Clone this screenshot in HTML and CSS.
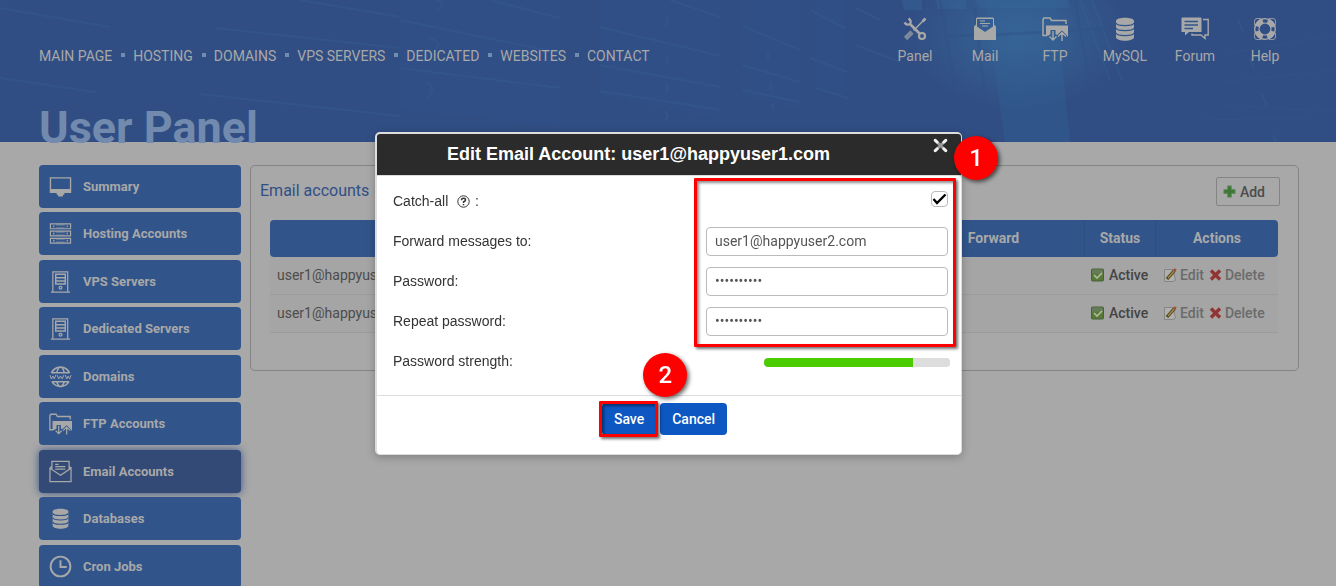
FILE: index.html
```html
<!DOCTYPE html>
<html lang="en">
<head>
<meta charset="utf-8">
<title>User Panel</title>
<link rel="stylesheet" href="styles.css">
</head>
<body>
<svg class="defs" aria-hidden="true">
  <symbol id="i-ftp" viewBox="0 0 26 24">
    <path d="M5 18.500H1V2.500L2 1H8L9.500 3.500H24V7" fill="none" stroke="currentColor" stroke-width="1.500"/>
    <path d="M4 8.500H26V20L24.500 18L20 13.500L15 18L13.500 17V13H8.500V17L6.500 18.500L4 19Z" fill="currentColor"/>
    <path d="M11 14V23M7.500 19.500L11 23L14.500 19.500M20 24V15M16 19.500L20 15.500L24 19.500" fill="none" stroke="currentColor" stroke-width="1.400"/>
  </symbol>
  <symbol id="i-db" viewBox="0 0 24 24">
    <path d="M3 4C3-.3 21-.3 21 4V20C21 25 3 25 3 20Z" fill="currentColor"/>
    <path class="cut" d="M3 6C4 9.500 20 9.500 21 6M3 11C4 14.500 20 14.500 21 11M3 16C4 19.500 20 19.500 21 16" fill="none" stroke-width="1.200"/>
  </symbol>
  <symbol id="i-tower" viewBox="0 0 24 24">
    <path d="M4 22.500V1.500H19.500V22.500M2 22.500H22" fill="none" stroke="currentColor" stroke-width="1.300"/>
    <path d="M7 4H17V14H7ZM7 7.500H17M7 11H17" fill="none" stroke="currentColor" stroke-width="1.500"/>
    <circle cx="12" cy="18" r="1.500" fill="none" stroke="currentColor" stroke-width="1.300"/>
  </symbol>
  <symbol id="i-active" viewBox="0 0 13 13">
    <rect x=".5" y=".5" width="12" height="12" rx="1" fill="#587a35" stroke="#46613b"/>
    <path d="M1 1H12V5H1Z" fill="#667c58"/>
    <path d="M3 6.500L6 9.500L11 4.500" fill="none" stroke="#adb8a2" stroke-width="1.700"/>
  </symbol>
  <symbol id="i-edit" viewBox="0 0 13 14">
    <path d="M.5 1.500H9L11.500 12L9 13.500H.5Z" fill="#b0b0ac" stroke="#858585"/>
    <path d="M3 11L10.500 2.500" stroke="#54451f" stroke-width="3.400"/>
    <path d="M4 10L10.500 2.500" stroke="#a08b4b" stroke-width="1.400"/>
    <path d="M10 3L11.800 1" stroke="#a24b3b" stroke-width="2.600"/>
  </symbol>
  <symbol id="i-delete" viewBox="0 0 13 13">
    <path d="M2 2L11 11M11 2L2 11" stroke="#913434" stroke-width="3.400"/>
  </symbol>
</svg>

<div class="page">
  <header class="header">
    <svg class="backdrop" viewBox="0 0 1336 142" preserveAspectRatio="none" aria-hidden="true">
      <defs>
        <radialGradient id="glow"><stop offset="0" stop-color="#366496"/><stop offset="1" stop-color="#366496" stop-opacity="0"/></radialGradient>
      </defs>
      <g fill="#31558b" opacity=".25">
        <path d="M400 0H560V125L400 110ZM600 0H720V120L600 95ZM742 0H800V110L742 95ZM815 0H845V100L815 85Z"/>
      </g>
      <path d="M985 0H1056L1070 142H1005Z" fill="#31588d" opacity=".8"/>
      <g fill="none" stroke="#345f92" stroke-width="2" opacity=".4">
        <path d="M0 8L110 27M0 78L95 92M215 28L400 48M200 94L400 116M300 0L400 17M400 20L560 53M490 0L560 18M400 68L560 88M600 27L720 56M600 65L720 87M600 91L720 110M670 0L720 17M742 26L800 50M742 65L800 82M742 90L800 102M810 10L845 28M810 58L847 72M815 88L848 98M856 8L880 20M856 45L900 62"/>
        <path d="M436 0Q447 2 438 10M429 38Q444 42 435 50M426 82Q438 88 427 99M665 15Q670 20 665 26M665 55Q670 60 665 65M665 83Q670 88 665 93M665 111Q670 116 665 121M768 52V60M771 82V90M773 103V110M1238 20L1243 31M1250 58L1254 69M1262 94L1267 106M1273 135L1276 142"/>
        <path d="M1080 0L1110 80M1092 0L1122 80" />
      </g>
      <path d="M1220 55L1336 35M1224 82L1336 70M1225 105L1336 112M1200 120L1310 118" fill="none" stroke="#345f92" opacity=".25"/>
      <ellipse cx="1018" cy="35" rx="110" ry="75" fill="url(#glow)"/>
      <path d="M975 0H1068L1070 8H979ZM902 0H922V10H904ZM936 0H966V9H938Z" fill="#376a9a" opacity=".4"/>
      <path d="M945 36Q1010 35 1110 28M940 0L965 142M975 8L990 142M1075 0L1100 142" fill="none" stroke="#304f86" stroke-width="3" opacity=".4"/>
    </svg>
    <div class="header-inner">
      <div class="topbar">
        <nav aria-label="Main">
          <ul class="nav">
            <li><a href="#">MAIN PAGE</a></li>
            <li><a href="#">HOSTING</a></li>
            <li><a href="#">DOMAINS</a></li>
            <li><a href="#">VPS SERVERS</a></li>
            <li><a href="#">DEDICATED</a></li>
            <li><a href="#">WEBSITES</a></li>
            <li><a href="#">CONTACT</a></li>
          </ul>
        </nav>
        <nav class="tools" aria-label="Tools">
          <a href="#"><svg viewBox="0 0 24 24" fill="none" stroke="currentColor"><path d="M6.500 6.500L17 17" stroke-width="2.600"/><path d="M1.500 5.500Q4 9 7 6.800Q9 4 5.500 1.500" stroke-width="2.200"/><circle cx="19" cy="19" r="3" stroke-width="2.200"/><path d="M10.500 13.500L20 4" stroke-width="1.400"/><path d="M19.500 4.500L22.500 1.500" stroke-width="2.600"/><path d="M2.500 21.500L9 15" stroke-width="4.600" opacity=".65"/></svg>Panel</a>
          <a href="#"><svg viewBox="0 0 24 24"><path d="M1 9.500L3 7.500V1.500L4 .5H20L21 1.500V7.500L23 9.500V23H1Z" fill="currentColor"/><path class="cut-fill" d="M4 2H20V9.500L12 15L4 9.500Z"/><path d="M7 4H12M7 6.500H17M9 9H15" stroke="currentColor" stroke-width="1.200"/></svg>Mail</a>
          <a href="#"><svg class="wide"><use href="#i-ftp"/></svg>FTP</a>
          <a href="#"><svg viewBox="0 0 24 24"><use href="#i-db"/></svg>MySQL</a>
          <a href="#"><svg class="forum" viewBox="0 0 28 24"><path d="M.500 1.500Q.5 .5 1.500 .5H19.500Q20.500 .5 20.500 1.500V15H8L4 18.500V15H.5Z" fill="currentColor"/><path class="cut" d="M3.500 4.500H17M3.500 8H17M3.500 11.500H12" stroke-width="1.500"/><path d="M22 2.500H27.200V18H24V21.500L20 18H11V16.500" fill="none" stroke="currentColor" stroke-width="1.400"/></svg>Forum</a>
          <a href="#"><svg viewBox="0 0 24 24" fill="none" stroke="currentColor"><path d="M1.500 8V4Q1.500 1.500 4 1.500H8M16 1.500H20Q22.500 1.500 22.500 4V8M22.500 16V20Q22.500 22.500 20 22.500H16M8 22.500H4Q1.500 22.500 1.500 20V16" stroke-width=".8"/><circle cx="12" cy="12" r="10.300" stroke-width="1.200"/><circle cx="12" cy="12" r="6" stroke-width="1.200"/><circle cx="12" cy="12" r="8.200" stroke-width="5" stroke-dasharray="8.200 4.681" stroke-dashoffset="-2.340"/></svg>Help</a>
        </nav>
      </div>
      <h1 class="title">User Panel</h1>
    </div>
  </header>

  <main class="content">
    <nav aria-label="Panel sections">
      <ul class="side">
        <li><a href="#"><svg viewBox="0 0 24 24"><path d="M1.500 2.500H22.500V17.500H1.500Z" fill="none" stroke="currentColor" stroke-width="1.400"/><path d="M1.500 14H22.500V18H1.500ZM8 18H16V20H14.500V22H9.500V20H8Z" fill="currentColor"/></svg>Summary</a></li>
        <li><a href="#"><svg viewBox="0 0 24 24" fill="none" stroke="currentColor" stroke-width="1.200"><path d="M1.500 1.500H22.500V6.500H1.500ZM1.500 9H22.500V14H1.500ZM1.500 16.500H22.500V21.500H1.500ZM5 3V5M5 10.500V12.500M5 18V20M19 3V5M19 10.500V12.500M19 18V20"/><path d="M7.500 2.500H16.500M7.500 5.500H16.500M7.500 10H16.500M7.500 13H16.500M7.500 17.500H16.500M7.500 20.500H16.500" opacity=".5"/></svg>Hosting Accounts</a></li>
        <li><a href="#"><svg><use href="#i-tower"/></svg>VPS Servers</a></li>
        <li><a href="#"><svg><use href="#i-tower"/></svg>Dedicated Servers</a></li>
        <li><a href="#"><svg viewBox="0 0 24 24" fill="none" stroke="currentColor" stroke-width="1.600"><path d="M2.500 8A10.300 10.300 0 0 1 21.500 8M3 16.500A10.300 10.300 0 0 0 21 16.500M3 7.500H21M4 17H20M8 7.500Q9 3.500 11 1.500M16 7.500Q15 3.500 13 1.500M8 17Q9 20 11 22M16 17Q15 20 13 22"/><path d="M1 10L2.500 14L4 11L5.500 14L7 10M8.500 10L10.200 14L12 11L13.800 14L15.500 10M17 10L18.500 14L20 11L21.500 14L23 10" stroke-width="1"/></svg>Domains</a></li>
        <li><a href="#"><svg><use href="#i-ftp"/></svg>FTP Accounts</a></li>
        <li><a href="#" class="current" aria-current="page"><svg viewBox="0 0 24 24" fill="none" stroke="currentColor" stroke-width="1.300"><path d="M1 8V22H23V8L12 15.500L1 8L3 6M23 8L21 6M3 9V1H21V9M6.500 4H10M6.500 6.500H17M6.500 9H17"/></svg>Email Accounts</a></li>
        <li><a href="#"><svg class="small" viewBox="0 0 24 24"><use href="#i-db"/></svg>Databases</a></li>
        <li><a href="#"><svg viewBox="0 0 24 24" fill="none" stroke="currentColor" stroke-width="2"><circle cx="12" cy="11.500" r="10.300"/><path d="M12 5V12H18.500"/></svg>Cron Jobs</a></li>
      </ul>
    </nav>

    <section class="panel">
      <div class="panel-head">
        <h2>Email accounts</h2>
        <button type="button" class="add"><svg viewBox="0 0 12 12"><path d="M4.500 1H7.500V4.500H11V7.500H7.500V11H4.500V7.500H1V4.500H4.500Z" fill="#38772f" stroke="#52824a"/></svg>Add</button>
      </div>
      <table class="accounts">
        <colgroup><col><col class="c-forward"><col class="c-status"><col class="c-actions"></colgroup>
        <thead>
          <tr><th></th><th>Forward</th><th>Status</th><th>Actions</th></tr>
        </thead>
        <tbody>
          <tr>
            <td>user1@happyuser1.com</td><td></td>
            <td><span class="state"><svg class="mini"><use href="#i-active"/></svg>Active</span></td>
            <td><span class="actions"><a href="#"><svg class="mini"><use href="#i-edit"/></svg>Edit</a><a href="#"><svg class="mini"><use href="#i-delete"/></svg>Delete</a></span></td>
          </tr>
          <tr>
            <td>user1@happyuser2.com</td><td></td>
            <td><span class="state"><svg class="mini"><use href="#i-active"/></svg>Active</span></td>
            <td><span class="actions"><a href="#"><svg class="mini"><use href="#i-edit"/></svg>Edit</a><a href="#"><svg class="mini"><use href="#i-delete"/></svg>Delete</a></span></td>
          </tr>
        </tbody>
      </table>
    </section>
  </main>
</div>

<div class="overlay">
  <form class="modal" role="dialog" aria-labelledby="dialog-title">
    <div class="modal-head">
      <h2 id="dialog-title">Edit Email Account: user1@happyuser1.com</h2>
      <button type="button" class="close" aria-label="Close"><svg viewBox="0 0 14 14"><path d="M2 2L12 12M12 2L2 12" stroke="#999" stroke-width="2.600" stroke-linecap="round"/><path d="M2 2L4 4M10 10L12 12M12 2L10 4M4 10L2 12" stroke="#f2f2f2" stroke-width="2.600" stroke-linecap="round"/></svg></button>
      <span class="badge badge-one">1</span>
    </div>
    <div class="modal-body">
      <div class="row"><label for="catchall">Catch-all&nbsp; <svg class="help" viewBox="0 0 13 13" fill="none" stroke="#333"><circle cx="6.500" cy="6.500" r="5.700"/><path d="M4.500 5.200Q4.500 3.300 6.500 3.300Q8.500 3.300 8.500 5Q8.500 6 6.500 7V8M6.500 9V10.300" stroke-width="1.500"/></svg> :</label><input type="checkbox" id="catchall" checked></div>
      <div class="row"><label for="forward">Forward messages to:</label><input class="field" type="text" id="forward" value="user1@happyuser2.com"></div>
      <div class="row"><label for="pass">Password:</label><input class="field" type="password" id="pass" value="abcdefghij" autocomplete="off"></div>
      <div class="row"><label for="pass2">Repeat password:</label><input class="field" type="password" id="pass2" value="abcdefghij" autocomplete="off"></div>
      <div class="row"><label for="strength">Password strength:</label><meter id="strength" min="0" max="100" value="80"></meter></div>
      <span class="frame"></span>
    </div>
    <div class="modal-foot">
      <span class="marked"><button type="submit" class="btn">Save</button><span class="badge badge-two">2</span></span>
      <button type="button" class="btn">Cancel</button>
    </div>
  </form>
</div>
</body>
</html>
```
FILE: styles.css
```css
* { box-sizing: border-box; }

body {
  margin: 0;
  background: #a8a8a8;
  font-family: Roboto, "Liberation Sans", sans-serif;
  font-size: 14px;
  color: #4c4c4c;
}

a { color: inherit; text-decoration: none; }
button, input { font: inherit; }
.defs { position: absolute; width: 0; height: 0; }
.cut { stroke: #31558b; }
.cut-fill { fill: #345e92; }

.page { height: 100vh; overflow: hidden; }

/* Header */
.header { position: relative; height: 142px; background: #314e84; color: #a8a8a8; }
.backdrop { position: absolute; inset: 0; width: 100%; height: 100%; }
.header-inner { position: relative; padding: 16px 36px 0 39px; }
.topbar { display: flex; justify-content: space-between; align-items: flex-end; }
.nav { display: flex; list-style: none; margin: 0; padding: 0; line-height: 18px; }
.nav li { display: flex; align-items: center; }
.nav li + li::before { content: ""; width: 4px; height: 4px; margin: 0 8px 2px 9px; background: #6f8eaf; }
.tools { display: flex; }
.tools a { width: 70px; display: flex; flex-direction: column; align-items: center; gap: 5px; line-height: 18px; }
.tools svg { width: 24px; height: 26px; }
.tools .wide { width: 26px; }
.tools .forum { width: 28px; }
.title { margin: 34px 0 0; font-size: 45px; line-height: 58px; font-weight: 700; color: #728aad; }

/* Layout */
.content { display: flex; align-items: flex-start; gap: 9px; padding: 23px 37px 0 39px; }

.side { list-style: none; width: 202px; margin: 0; padding: 0; }
.side li { margin-bottom: 4px; }
.side li:nth-child(even) { margin-bottom: 5px; }
.side a {
  display: flex; align-items: center; gap: 11px; height: 43px; padding: 0 10px;
  border-radius: 4px; background: #31558b; color: #a8a8a8; font-weight: 700; font-size: 13px;
}
.side a.current { background: #324a75; box-shadow: 0 0 8px #3a5488; }
.side svg { width: 23px; height: 24px; }
.side .small { height: 21px; }

.panel { flex: 1; min-height: 206px; padding: 11px 18px 0 19px; border: 1px solid #848484; border-radius: 5px; }
.panel-head { display: flex; justify-content: space-between; align-items: center; margin: 0 0 14px -10px; }
.panel h2 { margin: 0; font-size: 16px; line-height: 27px; padding-bottom: 2px; font-weight: 400; color: #314f86; }
.add {
  display: flex; align-items: center; gap: 4px; height: 29px; padding: 0 14px 0 6px;
  background: none; border: 1px solid #848484; border-radius: 2px; color: #4c4c4c; font-size: 14px; font-weight: 500;
}
.add svg { width: 13px; height: 13px; }

.accounts { width: calc(100% - 2px); table-layout: fixed; border-collapse: separate; border-spacing: 0; }
.c-forward { width: 182px; }
.c-status { width: 71px; }
.c-actions { width: 122px; }
.accounts th { height: 37px; padding: 0 0 1px; background: #31558b; color: #a8a8a8; font-size: 14px; font-weight: 700; border-right: 1px solid #2e4f82; }
.accounts th:first-child { border-radius: 4px 0 0 4px; }
.accounts th:last-child { border-radius: 0 4px 4px 0; border-right: 0; }
.accounts td { height: 38px; padding: 0 0 1px; border-bottom: 1px solid #9b9b9b; background: #a5a5a5; }
.accounts td:first-child { padding-left: 7px; }
.state, .actions, .actions a { display: flex; align-items: center; white-space: nowrap; font-weight: 500; }
.state { gap: 5px; padding-left: 6px; color: #444; }
.actions { gap: 5px; padding-left: 8px; }
.actions a { gap: 3px; color: #6b6b6b; }
.mini { width: 13px; height: 14px; }

/* Dialog */
.overlay { position: fixed; inset: 0; display: flex; justify-content: center; align-items: flex-start; padding: 132px 0 0 1px; }
.modal {
  width: 587px; border: 2px solid #ddd; border-width: 2px 1px 1px 2px; border-radius: 5px; background: #fff;
  box-shadow: 0 2px 8px rgba(0, 0, 0, .25); font-family: "Liberation Sans", Arial, sans-serif; color: #333;
}
.modal-head { position: relative; padding: 0 60px 0 70px; background: #2b2b2b; border-bottom: 1px solid #ddd; border-radius: 3px 3px 0 0; }
.modal-head h2 { margin: 0; font-size: 18px; line-height: 41px; color: #fff; white-space: nowrap; }
.close { position: absolute; top: 4px; right: 13px; width: 15px; height: 15px; padding: 0; border: 0; background: none; }
.close svg { display: block; width: 15px; height: 15px; }

.modal-body { position: relative; display: grid; gap: 11px; padding: 11px 13px 19px 16px; font-size: 14px; }
.row { display: flex; align-items: center; justify-content: space-between; height: 29px; line-height: 29px; }
.help { width: 13px; height: 13px; margin: 0 1px; vertical-align: -2px; }
.field {
  width: 242px; height: 29px; padding: 0 8px 1px; border: 1px solid #bbb; border-radius: 4px;
  background: #fff; color: #555; font-family: Roboto, sans-serif; font-size: 14px; outline: 0;
}
.row input[type="checkbox"] {
  appearance: none; width: 17px; height: 16px; margin: 0 0 6px; border: 1px solid #bbb; border-radius: 4px;
  background: #fff url("data:image/svg+xml,%3Csvg xmlns='http://www.w3.org/2000/svg' viewBox='0 0 15 14'%3E%3Cpath d='M1.500 7L5 11L13.500 2.500' fill='none' stroke='%23000' stroke-width='2.400'/%3E%3C/svg%3E") center / 15px 14px no-repeat;
}
.row meter { appearance: none; width: 186px; height: 9px; margin: 2px -2px 0 0; border-radius: 4px; overflow: hidden; background: #ddd; }
.row meter::-webkit-meter-inner-element { height: 9px; }
.row meter::-webkit-meter-bar { height: 9px; border: 0; border-radius: 4px; background: #ddd; }
.row meter::-webkit-meter-optimum-value { background: #4bcc00; }

.modal-foot { display: flex; justify-content: center; gap: 4px; padding: 7px 9px 19px 0; border-top: 1px solid #ddd; }
.btn { height: 32px; padding: 0 12px; border: 0; border-radius: 4px; background: #0d57c2; color: #fff; font-family: Roboto, sans-serif; font-size: 14px; font-weight: 500; }
.marked { position: relative; }
.marked::after, .frame {
  content: ""; position: absolute; border: 3px solid #f00; border-radius: 1px; pointer-events: none;
  box-shadow: 2px 2px 3px rgba(0, 0, 0, .55), inset 2px 2px 3px rgba(0, 0, 0, .45);
}
.marked::after { inset: -2px -2px -2px -3px; }
.frame { top: 2px; right: 5px; width: 262px; height: 169px; }

.badge {
  position: absolute; display: grid; place-items: center; width: 44px; height: 44px; border-radius: 50%;
  background: #f00; box-shadow: 2px 2px 4px rgba(0, 0, 0, .6); color: #fff; font-family: Roboto, sans-serif; font-size: 24px; font-weight: 500;
}
.badge-one { top: 2px; right: -37px; }
.badge-two { top: -50px; right: -31px; }
```
